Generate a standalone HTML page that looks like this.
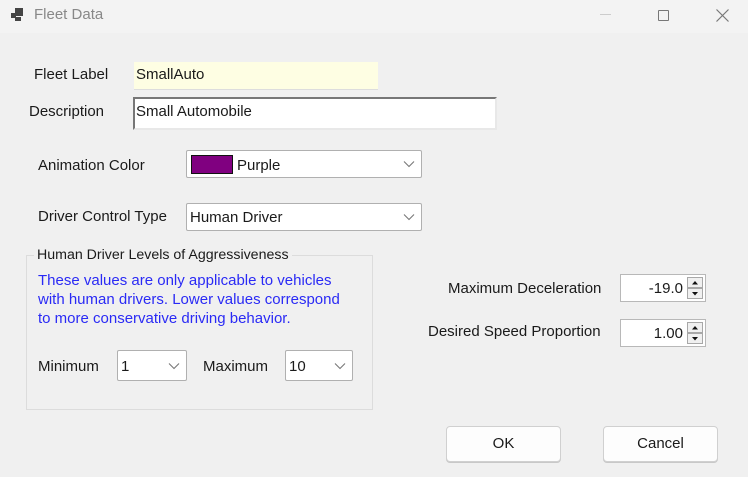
<!DOCTYPE html>
<html><head><meta charset="utf-8"><style>
body{margin:0;width:748px;height:477px;background:#f0f0f0;font-family:"Liberation Sans",sans-serif;font-size:15px;color:#1a1a1a;position:relative;overflow:hidden}
.a{position:absolute;white-space:nowrap}
.t{line-height:18px}
.combo{position:absolute;background:#fff;border:1px solid #b0b0b0;border-radius:2px;box-sizing:border-box}
.chev{position:absolute;right:6px;top:50%;margin-top:-4px}
.btn{position:absolute;background:#fdfdfd;border:1px solid #d0d0d0;border-radius:4px;box-sizing:border-box;text-align:center;line-height:34px;box-shadow:0 1px 0 #c8c8c8}
.spin{position:absolute;background:#fff;border:1px solid #b8b8b8;box-sizing:border-box}
.sb{position:absolute;right:2px;width:16px;height:11px;background:#f0f0f0;border:1px solid #a8a8a8;box-sizing:border-box}
</style></head><body>
<div class="a" style="left:0;top:0;width:748px;height:33px;background:#f3f3f3"></div>
<svg class="a" style="left:11px;top:8px" width="14" height="14"><rect x="4" y="0" width="8" height="8" fill="#444"/><rect x="0" y="5" width="5" height="5" fill="#444"/><rect x="4" y="9" width="6" height="4" fill="#444"/></svg>
<div class="a t" style="left:34px;top:6px;color:#888;font-size:15px">Fleet Data</div>
<div class="a" style="left:600px;top:14px;width:11px;height:1px;background:#ccc"></div>
<div class="a" style="left:658px;top:10px;width:11px;height:11px;border:1px solid #777;border-radius:1px;box-sizing:border-box"></div>
<svg class="a" style="left:716px;top:9px" width="13" height="13"><path d="M0.5 0.5L12.5 12.5M12.5 0.5L0.5 12.5" stroke="#777" stroke-width="1.2"/></svg>

<div class="a t" style="left:34px;top:66px">Fleet Label</div>
<div class="a" style="left:134px;top:62px;width:244px;height:27px;background:#fefee3;border-bottom:1px solid #ddd"></div>
<div class="a t" style="left:136px;top:66px">SmallAuto</div>
<div class="a t" style="left:29px;top:103px">Description</div>
<div class="a" style="left:133px;top:97px;width:364px;height:33px;background:#fff;border:2px solid;border-color:#777 #e8e8e8 #e8e8e8 #777;box-sizing:border-box"></div>
<div class="a t" style="left:136px;top:103px">Small Automobile</div>

<div class="a t" style="left:38px;top:157px">Animation Color</div>
<div class="combo" style="left:186px;top:150px;width:236px;height:28px">
<div class="a" style="left:4px;top:4px;width:40px;height:17px;background:#800080;border:1px solid #111"></div>
<div class="a t" style="left:50px;top:6px">Purple</div>
<svg class="chev" width="12" height="8"><path d="M1 1.5L6 6.5L11 1.5" fill="none" stroke="#777" stroke-width="1.1"/></svg></div>

<div class="a t" style="left:38px;top:208px">Driver Control Type</div>
<div class="combo" style="left:186px;top:203px;width:236px;height:28px">
<div class="a t" style="left:3px;top:5px">Human Driver</div>
<svg class="chev" width="12" height="8"><path d="M1 1.5L6 6.5L11 1.5" fill="none" stroke="#777" stroke-width="1.1"/></svg></div>

<div class="a" style="left:26px;top:255px;width:347px;height:155px;border:1px solid #dcdcdc;box-sizing:border-box"></div>
<div class="a t" style="left:34px;top:246px;background:#f0f0f0;padding:0 3px;font-size:14.2px">Human Driver Levels of Aggressiveness</div>
<div class="a t" style="left:38px;top:271px;color:#2a2af5;line-height:19px">These values are only applicable to vehicles<br>with human drivers. Lower values correspond<br>to more conservative driving behavior.</div>
<div class="a t" style="left:38px;top:358px">Minimum</div>
<div class="combo" style="left:117px;top:350px;width:70px;height:31px">
<div class="a t" style="left:3px;top:7px">1</div>
<svg class="chev" width="12" height="8"><path d="M1 1.5L6 6.5L11 1.5" fill="none" stroke="#777" stroke-width="1.1"/></svg></div>
<div class="a t" style="left:203px;top:358px">Maximum</div>
<div class="combo" style="left:285px;top:350px;width:68px;height:31px">
<div class="a t" style="left:3px;top:7px">10</div>
<svg class="chev" width="12" height="8"><path d="M1 1.5L6 6.5L11 1.5" fill="none" stroke="#777" stroke-width="1.1"/></svg></div>

<div class="a t" style="left:448px;top:280px">Maximum Deceleration</div>
<div class="spin" style="left:620px;top:274px;width:86px;height:28px">
<div class="a t" style="right:22px;top:5px">-19.0</div>
<div class="sb" style="top:2px"><svg width="14" height="9" style="position:absolute;left:0;top:0"><path d="M4 6.5L7 3L10 6.5Z" fill="#111"/></svg></div>
<div class="sb" style="top:13px"><svg width="14" height="9" style="position:absolute;left:0;top:0"><path d="M4 3L7 6.5L10 3Z" fill="#111"/></svg></div></div>

<div class="a t" style="left:428px;top:323px">Desired Speed Proportion</div>
<div class="spin" style="left:620px;top:319px;width:86px;height:28px">
<div class="a t" style="right:22px;top:5px">1.00</div>
<div class="sb" style="top:2px"><svg width="14" height="9" style="position:absolute;left:0;top:0"><path d="M4 6.5L7 3L10 6.5Z" fill="#111"/></svg></div>
<div class="sb" style="top:13px"><svg width="14" height="9" style="position:absolute;left:0;top:0"><path d="M4 3L7 6.5L10 3Z" fill="#111"/></svg></div></div>

<div class="btn" style="left:446px;top:426px;width:115px;height:36px">OK</div>
<div class="btn" style="left:603px;top:426px;width:115px;height:36px">Cancel</div>
</body></html>
